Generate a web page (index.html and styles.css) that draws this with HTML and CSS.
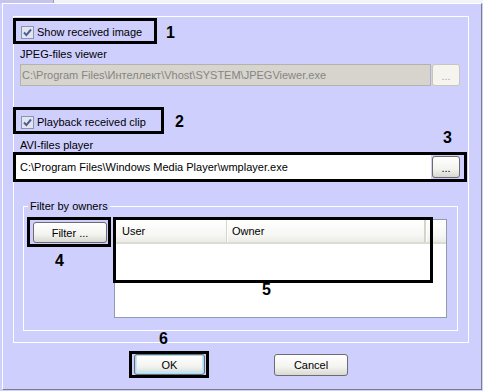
FILE: index.html
```html
<!DOCTYPE html>
<html lang="en">
<head>
    <meta charset="UTF-8">
    <meta name="viewport" content="width=device-width, initial-scale=1.0">
    <title>Detector settings</title>
    <link rel="stylesheet" href="styles.css">
</head>
<body>

    <div class="tabs">
        <div class="tabs-side"></div>
        <div class="tabs-page"></div>
    </div>

    <div class="dialog">
        <div class="group">
            <div class="row">
                <label class="mark mark-1">
                    <svg class="check" width="13" height="13" viewBox="0 0 13 13"><rect x="0.5" y="0.5" width="12" height="12" fill="#e4e4ec" stroke="#8796b4"/><path d="M3 6.5l2.4 2.6 4.6-5.6" fill="none" stroke="#46609a" stroke-width="2"/></svg>
                    Show received image
                </label>
                <span class="num num-1">1</span>
            </div>

            <div class="caption caption-jpeg">JPEG-files viewer</div>
            <div class="path-row">
                <div class="path path-disabled">C:\Program Files\Интеллект\Vhost\SYSTEM\JPEGViewer.exe</div>
                <button class="btn btn-browse" disabled>...</button>
            </div>

            <div class="row row-2">
                <label class="mark mark-2">
                    <svg class="check" width="13" height="13" viewBox="0 0 13 13"><rect x="0.5" y="0.5" width="12" height="12" fill="#e4e4ec" stroke="#8796b4"/><path d="M3 6.5l2.4 2.6 4.6-5.6" fill="none" stroke="#46609a" stroke-width="2"/></svg>
                    Playback received clip
                </label>
                <span class="num num-2">2</span>
            </div>

            <div class="caption-row">
                <span class="caption">AVI-files player</span>
                <span class="num num-3">3</span>
            </div>
            <div class="mark mark-3">
                <div class="path path-player">C:\Program Files\Windows Media Player\wmplayer.exe</div>
                <button class="btn btn-browse">...</button>
            </div>

            <fieldset class="owners">
                <legend>Filter by owners</legend>
                <div class="owners-body">
                    <div class="filter-col">
                        <div class="mark mark-4"><button class="btn btn-filter">Filter ...</button></div>
                        <span class="num num-4">4</span>
                    </div>
                    <div class="listview">
                        <div class="lv-head">
                            <span class="lv-col lv-user">User</span>
                            <span class="lv-col lv-owner">Owner</span>
                            <span class="lv-rest"></span>
                        </div>
                        <div class="mark mark-5"></div>
                        <span class="num num-5">5</span>
                    </div>
                </div>
            </fieldset>
        </div>

        <div class="actions">
            <div class="mark mark-6">
                <button class="btn btn-ok">OK</button>
                <span class="num num-6">6</span>
            </div>
            <button class="btn btn-cancel">Cancel</button>
        </div>
    </div>

</body>
</html>
```

FILE: styles.css
```css
body {
    margin: 0;
    height: 391px;
    overflow: hidden;
    background-color: #cfcffd;
    font-family: "Liberation Sans", Arial, sans-serif;
    font-size: 11px;
    color: #000;
}
.tabs {
    display: flex;
    height: 3px;
}
.tabs-side {
    width: 53px;
    background-color: #c4c4ec;
}
.tabs-page {
    flex: 1;
    background-color: #f2f2fa;
    border-left: 1px solid #9a9ab4;
}
.dialog {
    box-sizing: border-box;
    height: 387px;
    margin: 0 1px 0 2px;
    border: 1px solid;
    border-color: #fff #7c7c8c #7c7c8c #fff;
}
.group {
    box-sizing: border-box;
    width: 456px;
    height: 327px;
    margin: 12px 0 0 10px;
    border: 1px solid #fff;
}
.mark {
    box-sizing: border-box;
    border: 3px solid #000;
}
.row {
    display: flex;
    align-items: flex-start;
    margin: 1px 0 0 -1px;
}
.row-2 {
    margin-top: 21px;
}
.mark-1, .mark-2 {
    display: flex;
    align-items: center;
    gap: 3px;
    padding: 3px 0 0 5px;
    line-height: 13px;
}
.mark-1 {
    width: 144px;
    height: 26px;
}
.mark-2 {
    width: 151px;
    height: 27px;
    padding-top: 4px;
}
.check {
    flex: none;
}
.num {
    font-size: 16px;
    font-weight: bold;
    line-height: 12px;
}
.num-1 {
    margin: 9px 0 0 9px;
}
.num-2 {
    margin: 9px 0 0 11px;
}
.caption {
    line-height: 13px;
}
.caption-jpeg {
    margin: 4px 0 0 6px;
}
.path-row {
    display: flex;
    margin: 3px 0 0 6px;
}
.path {
    box-sizing: border-box;
    white-space: nowrap;
    overflow: hidden;
}
.path-disabled {
    width: 411px;
    height: 22px;
    padding-left: 1px;
    line-height: 20px;
    color: #858585;
    background-color: #d7d4cd;
    border: 1px solid #b4b2ac;
}
.caption-row {
    display: flex;
    justify-content: space-between;
    align-items: flex-end;
    margin: -2px 16px 0 6px;
}
.num-3 {
    margin-bottom: 8px;
}
.mark-3 {
    display: flex;
    width: 454px;
    height: 30px;
    margin-left: -1px;
    padding-right: 4px;
}
.path-player {
    flex: 1;
    height: 24px;
    padding-left: 4px;
    line-height: 24px;
    background-color: #fff;
}
.btn {
    box-sizing: border-box;
    padding: 0;
    font-family: inherit;
    font-size: 11px;
    color: #000;
    background: linear-gradient(#ffffff, #f3f3ef 60%, #d9d8d2);
    border: 1px solid #6c6c70;
    border-radius: 3px;
}
.btn-browse {
    width: 28px;
    height: 22px;
    margin-left: 1px;
    padding-top: 2px;
}
.mark-3 .btn-browse {
    margin: 1px 0 1px 1px;
}
.btn-browse:disabled {
    color: #a6a6a0;
    background: #f5f4ee;
    border-color: #c9c7bc;
}
.owners {
    box-sizing: border-box;
    width: 435px;
    min-width: 0;
    margin: 18px 0 0 9px;
    padding: 4px 10px 12px 4px;
    border: 1px solid #fff;
}
.owners legend {
    padding: 0 2px;
    line-height: 13px;
}
.owners-body {
    display: flex;
    align-items: flex-start;
}
.filter-col {
    margin-left: -1px;
}
.mark-4 {
    width: 84px;
    height: 30px;
    padding: 2px 1px 1px 3px;
}
.btn-filter {
    display: block;
    width: 74px;
    height: 21px;
}
.num-4 {
    display: block;
    margin: 8px 0 0 28px;
}
.listview {
    position: relative;
    box-sizing: border-box;
    width: 333px;
    height: 99px;
    margin: 2px 0 0 3px;
    background-color: #fff;
    border: 1px solid #8e9cb0;
}
.lv-head {
    display: flex;
    box-sizing: border-box;
    height: 24px;
    line-height: 22px;
    background: linear-gradient(#ffffff, #f6f6f3 70%, #ecebe6);
    border-bottom: 2px solid #dcdbd4;
}
.lv-col {
    box-sizing: border-box;
    border-right: 1px solid #d4d3cc;
    box-shadow: 1px 0 0 #fff;
}
.lv-user {
    width: 112px;
    padding-left: 7px;
}
.lv-owner {
    width: 199px;
    padding-left: 5px;
    border-right-width: 2px;
}
.lv-rest {
    flex: 1;
}
.mark-5 {
    position: absolute;
    left: -2px;
    top: -3px;
    width: 320px;
    height: 66px;
}
.num-5 {
    position: absolute;
    left: 147px;
    top: 64px;
}
.actions {
    display: flex;
    align-items: center;
    margin: 8px 0 0 126px;
}
.mark-6 {
    position: relative;
    width: 80px;
    height: 27px;
    padding-left: 2px;
}
.btn-ok {
    display: block;
    width: 71px;
    height: 21px;
    box-shadow: inset 0 0 0 1px #a6dcf4, inset 0 -1px 0 2px #c4e6f6;
}
.num-6 {
    position: absolute;
    left: 27px;
    top: -21px;
}
.btn-cancel {
    width: 74px;
    height: 22px;
    margin-left: 65px;
}
```
